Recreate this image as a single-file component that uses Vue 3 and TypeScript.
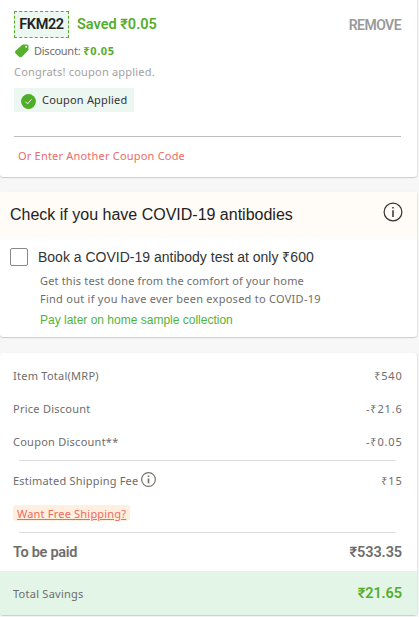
<script setup lang="ts">
interface Row {
  label: string
  value: string
}

const rows: Row[] = [
  { label: 'Item Total(MRP)', value: '₹540' },
  { label: 'Price Discount', value: '-₹21.6' },
  { label: 'Coupon Discount**', value: '-₹0.05' },
]
</script>

<template>
  <main class="page">
    <section class="card coupon">
      <div class="coupon-head">
        <span class="code">FKM22</span>
        <strong class="saved">Saved ₹0.05</strong>
        <span class="remove">REMOVE</span>
      </div>
      <div class="discount">
        <svg class="tag" viewBox="0 0 16 14">
          <path d="M8 .9Q8.500.5 9.200.5H13q1.500 0 1.500 1.500v3.400q0 .7-.5 1.200L8 12.700q-1.500 1.300-2.900 0L1.600 9.600q-1.400-1.400 0-2.900ZM12.200 1.800a1 1 0 1 0 0 2 1 1 0 0 0 0-2Z" fill="#55b02b" fill-rule="evenodd" />
        </svg>
        <span class="discount-label">Discount:</span>
        <strong class="discount-value">₹0.05</strong>
      </div>
      <p class="congrats">Congrats! coupon applied.</p>
      <div class="applied">
        <svg class="check" viewBox="0 0 16 16">
          <circle cx="8" cy="8" r="7.900" fill="#4fae27" />
          <path d="m4.700 8.200 2.200 2.200 4.300-4.700" fill="none" stroke="#fff" stroke-width="1" />
        </svg>
        <span>Coupon Applied</span>
      </div>
      <div class="another"><span>Or Enter Another Coupon Code</span></div>
    </section>

    <section class="card test">
      <header class="test-head">
        <h2>Check if you have COVID-19 antibodies</h2>
        <svg class="info-large" viewBox="0 0 20 20">
          <circle cx="10" cy="10" r="8.900" fill="none" stroke="#333" stroke-width="1.200" />
          <path d="M10 8.200V15M10 5v1.500" stroke="#333" stroke-width="1.500" />
        </svg>
      </header>
      <div class="test-body">
        <span class="box"></span>
        <div class="test-text">
          <div class="book">Book a COVID-19 antibody test at only ₹600</div>
          <p class="line one">Get this test done from the comfort of your home</p>
          <p class="line two">Find out if you have ever been exposed to COVID-19</p>
          <p class="pay">Pay later on home sample collection</p>
        </div>
      </div>
    </section>

    <section class="card bill">
      <div v-for="row in rows" :key="row.label" class="row">
        <span class="label">{{ row.label }}</span>
        <span class="value">{{ row.value }}</span>
      </div>
      <div class="rule first"></div>
      <div class="row shipping">
        <span class="fee">Estimated Shipping Fee
          <svg class="info-small" viewBox="0 0 14 14">
            <circle cx="7" cy="7" r="6.400" fill="none" stroke="#77736a" stroke-width="1.100" />
            <path d="M7 6v4.500M7 3.300v1.400" stroke="#77736a" stroke-width="1.600" />
          </svg>
        </span>
        <span class="value">₹15</span>
      </div>
      <div class="free"><span>Want Free Shipping?</span></div>
      <div class="rule"></div>
      <div class="row total">
        <strong class="paid">To be paid</strong>
        <strong class="amount">₹533.35</strong>
      </div>
      <div class="row savings">
        <span class="label">Total Savings</span>
        <strong class="amount">₹21.65</strong>
      </div>
    </section>
  </main>
</template>

<style>
body {
  background: #f7f7f7;
}
</style>

<style scoped>
.page {
  box-sizing: border-box;
  width: 419px;
  height: 617px;
  overflow: hidden;
  background: #f7f7f7;
  font-family: "Noto Sans", sans-serif;
  font-size: 11px;
  letter-spacing: 0.2px;
  color: #6e6d6b;
}
.page * { box-sizing: border-box; }
p, h2 { margin: 0; font-weight: 400; }
span, strong, p, h2, .book { white-space: nowrap; }
.card {
  width: 417px;
  background: #fff;
  border-radius: 3px;
  box-shadow: 0 1px 1px #ccc, 1px 0 1px #e7e7e7;
}
.coupon {
  height: 177px;
  padding: 11px 16px 0 14px;
  border-radius: 0 0 3px 3px;
}
.coupon-head { display: flex; height: 27px; align-items: center; }
.code, .saved, .remove, .paid, .amount {
  font-family: Roboto, "Noto Sans", sans-serif;
  font-weight: 600;
}
.code {
  width: 55px;
  height: 27px;
  border: 1px dashed #51b01f;
  background: #edf7f1;
  color: #222;
  font-size: 14.5px;
  line-height: 25px;
  text-align: center;
  letter-spacing: -0.4px;
}
.saved { margin-left: 8px; color: #54ad2b; font-size: 14.5px; letter-spacing: 0; }
.remove { margin: 1px 0 0 auto; color: #999; font-size: 14px; letter-spacing: -0.55px; }
.discount { display: flex; height: 26px; align-items: center; }
.tag { width: 16px; height: 14px; }
.discount-label { margin: -1px 0 0 4px; letter-spacing: -0.25px; }
.discount-value { margin: -1px 0 0 3px; color: #54ad2b; font-weight: 700; letter-spacing: 0.6px; }
.congrats { height: 24px; line-height: 16px; color: #a2a2a2; }
.applied {
  display: flex;
  width: 120px;
  height: 24px;
  padding-left: 7px;
  align-items: center;
  background: #edf7f1;
  color: #333;
}
.check { width: 15px; height: 15px; margin-top: 2px; }
.applied span { margin: -1px 0 0 6px; }
.another {
  margin-top: 24px;
  padding: 11px 4px 0;
  border-top: 1px solid #bdbdbd;
  color: #ec6c68;
  line-height: 15px;
}
.test { height: 145px; margin-top: 15px; }
.test-head {
  display: flex;
  height: 46px;
  padding: 0 14px 0 10px;
  justify-content: space-between;
  align-items: center;
  background: #fffbf6;
}
h2 {
  color: #222;
  font: 16px/20px "Liberation Sans", sans-serif;
  letter-spacing: 0;
}
.info-large { width: 20px; height: 20px; margin-top: -6px; }
.test-body { display: flex; padding: 9px 10px 0; }
.box { width: 18px; height: 18px; margin-top: 1px; border: 1px solid #888; border-radius: 2px; background: #fff; }
.test-text { margin-left: 10px; }
.book { color: #333; font: 14px/20px "Liberation Sans", sans-serif; letter-spacing: 0; }
.line { padding-left: 2px; line-height: 18px; }
.line.one { margin-top: 5px; letter-spacing: 0.17px; }
.line.two { letter-spacing: 0.26px; }
.pay { padding: 2px 0 0 2px; color: #50b43c; font: 12px/20px "Liberation Sans", sans-serif; letter-spacing: 0; }
.bill { height: 262px; margin-top: 16px; padding-top: 6px; overflow: hidden; }
.row {
  display: flex;
  height: 33px;
  padding: 0 15px 0 13px;
  justify-content: space-between;
  align-items: center;
}
.label { letter-spacing: 0.25px; }
.value { letter-spacing: 0.8px; margin-right: -0.5px; }
.rule { height: 1px; margin: 1px 21px 0 19px; background: #ddd; }
.rule.first { margin-top: 2px; }
.shipping { height: 39px; }
.fee { display: flex; align-items: center; }
.info-small { width: 15px; height: 15px; margin: -2px 0 0 3px; }
.free { height: 31px; padding: 5px 13px 0; line-height: 16px; }
.free span {
  display: inline-block;
  height: 16px;
  padding: 1px 4px 0;
  border-radius: 3px;
  background: #ffefdf;
  color: #ec6c64;
  line-height: 16px;
  text-decoration: underline;
}
.total { height: 38px; }
.paid, .amount { font-size: 14.5px; letter-spacing: -0.3px; }
.amount { letter-spacing: -0.1px; }
.savings { height: 45px; padding-bottom: 1px; background: #e2f5e7; }
.savings .amount { color: #54ad2b; }
</style>
